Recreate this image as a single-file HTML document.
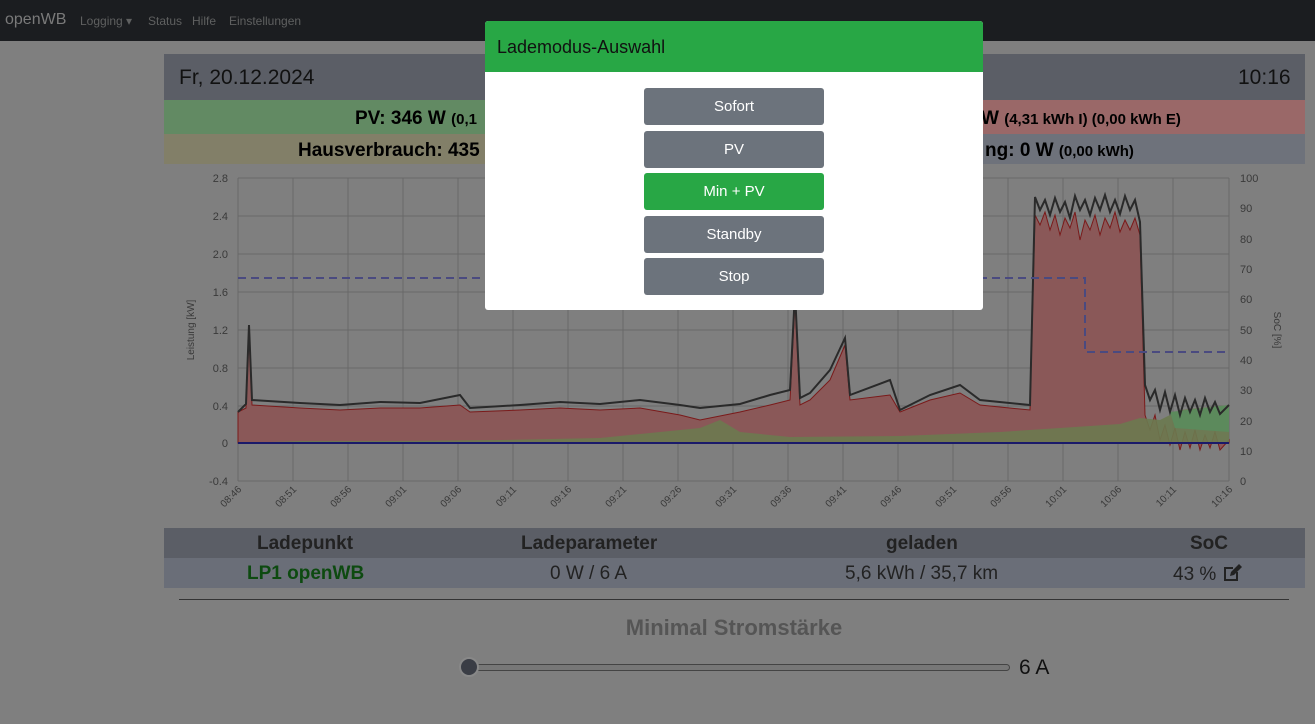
<!DOCTYPE html>
<html><head><meta charset="utf-8"><style>
*{box-sizing:border-box;margin:0;padding:0}
body{width:1315px;height:724px;overflow:hidden;background:#7f7f7f;font-family:"Liberation Sans",sans-serif;position:relative}
.nav{position:absolute;left:0;top:0;width:1315px;height:41px;background:#1b1d20;color:#5f6060;font-size:12px}
.nav span{position:absolute;top:14px}
.abs{position:absolute}
.bar{position:absolute;left:164px;width:1141px}
.c{text-align:center;font-weight:bold;font-size:19px;color:#000}
.btn{position:absolute;left:159px;width:180px;height:37px;border-radius:3px;background:#6c737c;color:#fff;font-size:15px;text-align:center;line-height:38px}
</style></head><body>
<div class="nav">
<span style="left:5px;top:11px;font-size:16px;color:#7a7a7a">openWB</span>
<span style="left:80px">Logging ▾</span>
<span style="left:148px">Status</span>
<span style="left:192px">Hilfe</span>
<span style="left:229px">Einstellungen</span>
</div>
<div class="bar" style="top:54px;height:46px;background:#5b5e66"></div>
<div class="abs" style="left:179px;top:66px;font-size:21px;color:#111">Fr, 20.12.2024</div>
<div class="abs" style="left:1238px;top:66px;font-size:21px;color:#111">10:16</div>
<div class="bar" style="top:100px;height:34px;background:linear-gradient(90deg,#628a63 0 60%,#9a6868 60%)"></div>
<div class="abs c" style="left:355px;top:108px">PV: 346 W <span style="font-size:15px">(0,1</span></div>
<div class="abs c" style="left:985px;top:108px"><span style="margin-left:-4px">W</span> <span style="font-size:15px">(4,31 kWh I) (0,00 kWh E)</span></div>
<div class="bar" style="top:134px;height:30px;background:linear-gradient(90deg,#827f68 0 60%,#6e727b 60%)"></div>
<div class="abs c" style="left:298px;top:140px">Hausverbrauch: 435</div>
<div class="abs c" style="left:985px;top:140px">ng: 0 W <span style="font-size:15px">(0,00 kWh)</span></div>

<svg class="abs" style="left:164px;top:164px" width="1141" height="362" viewBox="164 164 1141 362" font-family="Liberation Sans" font-size="11" fill="#3a3a3a">
<g stroke="#686868" stroke-width="1">
<path d="M238 178H1229M238 216H1229M238 254H1229M238 292H1229M238 330H1229M238 368H1229M238 406H1229M238 443H1229M238 481H1229"/>
<path d="M238 178V481M293 178V481M348 178V481M403 178V481M458 178V481M513 178V481M568 178V481M623 178V481M678 178V481M733 178V481M788 178V481M843 178V481M898 178V481M953 178V481M1008 178V481M1063 178V481M1118 178V481M1173 178V481M1229 178V481"/>
</g>
<g text-anchor="end"><text x="228" y="182">2.8</text><text x="228" y="220">2.4</text><text x="228" y="258">2.0</text><text x="228" y="296">1.6</text><text x="228" y="334">1.2</text><text x="228" y="372">0.8</text><text x="228" y="410">0.4</text><text x="228" y="447">0</text><text x="228" y="485">-0.4</text></g>
<g><text x="1240" y="182">100</text><text x="1240" y="212">90</text><text x="1240" y="243">80</text><text x="1240" y="273">70</text><text x="1240" y="303">60</text><text x="1240" y="334">50</text><text x="1240" y="364">40</text><text x="1240" y="394">30</text><text x="1240" y="425">20</text><text x="1240" y="455">10</text><text x="1240" y="485">0</text></g>
<text transform="translate(194,330) rotate(-90)" text-anchor="middle" font-size="10">Leistung [kW]</text>
<text transform="translate(1274,330) rotate(90)" text-anchor="middle" font-size="10">SoC [%]</text>
<g font-size="10" text-anchor="end">
<text transform="translate(242,490) rotate(-45)">08:46</text><text transform="translate(297,490) rotate(-45)">08:51</text><text transform="translate(352,490) rotate(-45)">08:56</text><text transform="translate(407,490) rotate(-45)">09:01</text><text transform="translate(462,490) rotate(-45)">09:06</text><text transform="translate(517,490) rotate(-45)">09:11</text><text transform="translate(572,490) rotate(-45)">09:16</text><text transform="translate(627,490) rotate(-45)">09:21</text><text transform="translate(682,490) rotate(-45)">09:26</text><text transform="translate(737,490) rotate(-45)">09:31</text><text transform="translate(792,490) rotate(-45)">09:36</text><text transform="translate(847,490) rotate(-45)">09:41</text><text transform="translate(902,490) rotate(-45)">09:46</text><text transform="translate(957,490) rotate(-45)">09:51</text><text transform="translate(1012,490) rotate(-45)">09:56</text><text transform="translate(1067,490) rotate(-45)">10:01</text><text transform="translate(1122,490) rotate(-45)">10:06</text><text transform="translate(1177,490) rotate(-45)">10:11</text><text transform="translate(1233,490) rotate(-45)">10:16</text>
</g>
<path d="M238 443L238 412L246 408L249 330L252 405L300 408L340 410L380 408L420 408L460 405L470 412L520 410L560 408L600 410L640 408L680 415L700 420L740 412L770 405L790 400L795 300L800 405L810 400L830 380L845 345L850 400L890 395L900 412L930 400L960 393L980 405L1030 410L1035 215L1040 225L1045 212L1050 230L1055 215L1060 235L1065 218L1070 228L1075 212L1080 240L1085 220L1090 230L1095 215L1100 235L1105 218L1110 228L1115 212L1120 232L1125 220L1130 230L1135 218L1140 235L1145 415L1150 430L1155 415L1160 440L1165 425L1170 445L1175 428L1180 450L1185 432L1190 448L1195 430L1200 450L1205 435L1210 448L1215 432L1220 450L1229 440L1229 443Z" fill="#8a5858" stroke="#7a1a1a" stroke-width="1"/>
<path d="M238 443L300 441L400 441L500 440L600 438L700 428L720 420L740 432L790 437L900 436L1000 432L1060 428L1120 424L1140 418L1160 420L1180 410L1229 405L1229 443Z" fill="#6b7a50" opacity="0.9"/>
<path d="M1170 412L1229 405L1229 432L1175 428Z" fill="#5c8a5c"/>
<path d="M238 412L246 404L249 325L252 400L300 403L340 405L380 402L420 403L460 395L470 408L520 405L560 402L600 404L640 400L680 405L700 408L740 404L770 395L790 390L795 292L800 398L810 393L830 370L845 338L850 395L890 380L900 410L930 395L960 385L980 400L1030 405L1035 197L1040 210L1045 200L1050 215L1055 198L1060 212L1065 202L1070 218L1075 196L1080 210L1085 200L1090 215L1095 198L1100 210L1105 195L1110 212L1115 200L1120 214L1125 196L1130 210L1135 200L1140 222L1145 385L1150 400L1155 390L1160 410L1165 392L1170 412L1175 395L1180 415L1185 398L1190 412L1195 400L1200 415L1205 398L1210 412L1215 402L1220 414L1229 405" fill="none" stroke="#2a2a2a" stroke-width="2"/>
<path d="M238 443H1229" stroke="#1a1a6a" stroke-width="2"/>
<path d="M238 278H1085V352H1229" fill="none" stroke="#4a4a80" stroke-width="2" stroke-dasharray="8,5"/>
</svg>

<div class="bar" style="top:528px;height:30px;background:#5b5e66"></div>
<div class="bar" style="top:558px;height:30px;background:#6a6e78"></div>
<div class="abs" style="left:164px;top:533px;width:1141px;font-size:19px;font-weight:bold;color:#222">
<span class="abs" style="left:93px">Ladepunkt</span><span class="abs" style="left:357px">Ladeparameter</span><span class="abs" style="left:722px">geladen</span><span class="abs" style="left:1026px">SoC</span></div>
<div class="abs" style="left:164px;top:563px;width:1141px;font-size:19px;color:#222">
<span class="abs" style="left:83px;color:#0d4a10;font-weight:bold">LP1 openWB</span><span class="abs" style="left:386px">0 W / 6 A</span><span class="abs" style="left:681px">5,6 kWh / 35,7 km</span><span class="abs" style="left:1009px">43 % <svg width="22" height="20" viewBox="0 0 22 20" style="vertical-align:-3px"><path d="M2 4h9v2H4v10h10v-7h2v9H2z" fill="#222"/><path d="M8 13l1-4 8-8 3 3-8 8z" fill="#222"/></svg></span></div>
<div class="abs" style="left:179px;top:599px;width:1110px;height:1px;background:#333"></div>
<div class="abs" style="left:0;top:615px;width:1468px;text-align:center;font-size:22px;font-weight:bold;color:#555">Minimal Stromstärke</div>
<div class="abs" style="left:462px;top:664px;width:548px;height:7px;border:1px solid #444;border-radius:4px;background:#777"></div>
<div class="abs" style="left:459px;top:657px;width:20px;height:20px;border-radius:50%;background:#3a3d45;border:2px solid #888"></div>
<div class="abs" style="left:1019px;top:656px;font-size:21px;color:#111">6 A</div>

<div class="abs" style="left:485px;top:21px;width:498px;height:289px;background:#fff;border-radius:3px;overflow:hidden">
<div style="height:51px;background:#28a745;color:#111;font-size:18px;padding:16px 12px">Lademodus-Auswahl</div>
<div class="btn" style="top:67px">Sofort</div>
<div class="btn" style="top:110px">PV</div>
<div class="btn" style="top:152px;background:#28a745">Min + PV</div>
<div class="btn" style="top:195px">Standby</div>
<div class="btn" style="top:237px">Stop</div>
</div>
</body></html>
